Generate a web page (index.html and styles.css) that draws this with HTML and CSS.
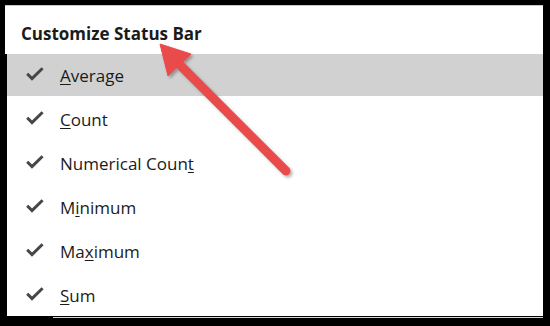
FILE: index.html
```html
<!DOCTYPE html>
<html>
<head>
<meta charset="utf-8">
<link rel="stylesheet" href="styles.css">
</head>
<body>
<div class="window">
  <div class="header">Customize Status Bar</div>
  <ul class="list">
    <li class="item active"><span class="check"><svg viewBox="0 0 18 14" width="18" height="14"><path d="M1.2 6.8 L6 11.6 L16.6 1.2" fill="none" stroke="#474747" stroke-width="3"/></svg></span><span class="label"><u>A</u>verage</span></li>
    <li class="item"><span class="check"><svg viewBox="0 0 18 14" width="18" height="14"><path d="M1.2 6.8 L6 11.6 L16.6 1.2" fill="none" stroke="#474747" stroke-width="3"/></svg></span><span class="label"><u>C</u>ount</span></li>
    <li class="item"><span class="check"><svg viewBox="0 0 18 14" width="18" height="14"><path d="M1.2 6.8 L6 11.6 L16.6 1.2" fill="none" stroke="#474747" stroke-width="3"/></svg></span><span class="label">Numerical Coun<u>t</u></span></li>
    <li class="item"><span class="check"><svg viewBox="0 0 18 14" width="18" height="14"><path d="M1.2 6.8 L6 11.6 L16.6 1.2" fill="none" stroke="#474747" stroke-width="3"/></svg></span><span class="label">M<u>i</u>nimum</span></li>
    <li class="item"><span class="check"><svg viewBox="0 0 18 14" width="18" height="14"><path d="M1.2 6.8 L6 11.6 L16.6 1.2" fill="none" stroke="#474747" stroke-width="3"/></svg></span><span class="label">Ma<u>x</u>imum</span></li>
    <li class="item"><span class="check"><svg viewBox="0 0 18 14" width="18" height="14"><path d="M1.2 6.8 L6 11.6 L16.6 1.2" fill="none" stroke="#474747" stroke-width="3"/></svg></span><span class="label"><u>S</u>um</span></li>
  </ul>
  <div class="bottom-line"></div>
  <svg class="arrow" viewBox="0 0 550 326" width="550" height="326">
    <defs>
      <filter id="sh" x="-20%" y="-20%" width="140%" height="140%">
        <feDropShadow dx="2" dy="2" stdDeviation="1.5" flood-color="#000" flood-opacity="0.3"/>
      </filter>
    </defs>
    <g filter="url(#sh)" fill="#e84b4a" stroke="#e84b4a">
      <line x1="286" y1="171" x2="178" y2="63" stroke-width="9" stroke-linecap="round"/>
      <polygon points="160,44 191,54 168,76" stroke-width="1" stroke-linejoin="round"/>
    </g>
  </svg>
</div>
</body>
</html>
```

FILE: styles.css
```css
html, body {
  margin: 0;
  padding: 0;
  background: #000;
}
.window {
  position: relative;
  width: 550px;
  height: 326px;
  background: #000;
  padding-top: 5px;
  box-sizing: border-box;
  font-family: "Open Sans", "Noto Sans", sans-serif;
  color: #1b1b1b;
}
.header {
  margin: 0 7px 0 5px;
  height: 48px;
  border-top: 1px solid #c9c9c9;
  background: #fff;
  display: flex;
  align-items: center;
  padding: 6px 0 0 16px;
  box-sizing: border-box;
  height: 49px;
  font-weight: 700;
  font-size: 17px;
}
.list {
  list-style: none;
  margin: 0 7px;
  padding: 0;
  background: #fff;
  display: flex;
  flex-direction: column;
  gap: 2px;
}
.item {
  height: 42px;
  display: flex;
  align-items: center;
}
.item.active {
  background: #d1d1d1;
}
.check {
  width: 53px;
  display: flex;
  justify-content: flex-start;
  padding: 0 0 3px 19px;
  box-sizing: border-box;
}
.check svg {
  display: block;
}
.label {
  font-size: 17px;
}
.label u {
  text-decoration-thickness: 1px;
  text-underline-offset: 2px;
}
.bottom-line {
  margin: 1px 7px 0 53px;
  height: 1px;
  background: #d3d3d3;
}
.arrow {
  position: absolute;
  left: 0;
  top: 0;
  pointer-events: none;
}
```
